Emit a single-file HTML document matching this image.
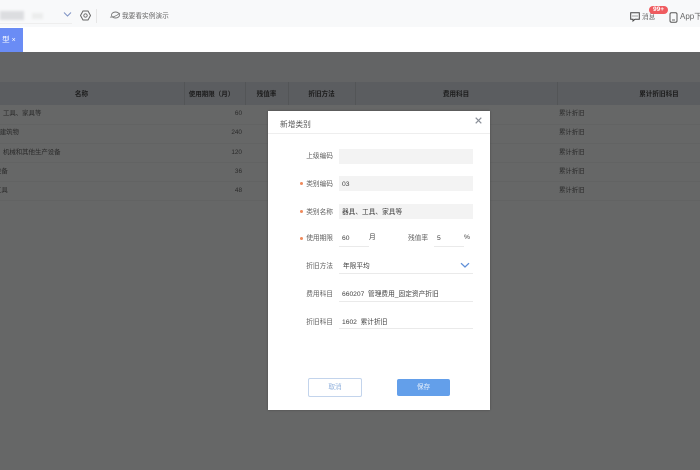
<!DOCTYPE html>
<html lang="zh">
<head>
<meta charset="utf-8">
<style>
html,body{margin:0;padding:0;width:700px;height:470px;overflow:hidden;background:#fff}
body{position:relative;font-family:"Liberation Sans","Noto Sans CJK SC",sans-serif;font-size:6.7px;color:#555;filter:blur(.3px)}
.a{position:absolute;white-space:nowrap}
#top{left:0;top:0;width:700px;height:27px;background:#f8f9fa}
#tab{left:0;top:28px;width:23px;height:24px;background:#6a8cf5;color:#fff;line-height:24px;font-size:7.5px}
#mask{left:0;top:52px;width:700px;height:418px;background:#666767}
#thead{left:0;top:82px;width:700px;height:23px;background:#5b5d60}
.th{top:83px;height:23px;line-height:23px;color:#1c1c1c;font-size:6.6px;text-align:center;font-weight:bold}
.vl{top:82px;width:1px;height:23px;background:#535557}
.td{color:#2a2a2a;font-size:6.4px;line-height:10px}
.hl{left:0;width:700px;height:1px;background:#626363}
#dlg{left:268px;top:111px;width:222px;height:299px;background:#fff;box-shadow:0 0 2px rgba(0,0,0,.3)}
#dlg .a{color:#555}
.lb{width:65px;text-align:right;left:0;font-size:6.7px;line-height:12px;color:#5f5f5f!important}
.st{width:3px;height:3px;border-radius:50%;background:#ef8a5c!important;left:32px}
.inp{left:71px;width:134px;height:15px;background:#f3f3f3}
.val{font-size:6.7px;line-height:12px;color:#3e3e3e!important}
.ul{height:1px;background:#eaeaea}
</style>
</head>
<body>
<div class="a" id="top"></div>
<div class="a" style="left:0;top:11px;width:24px;height:9px;background:#dcdde0;filter:blur(1.2px)"></div>
<div class="a" style="left:32px;top:13px;width:11px;height:6px;background:#eceded;filter:blur(1px)"></div>
<div class="a" style="left:0;top:23px;width:72px;height:1px;background:#eeeeee"></div>
<svg class="a" style="left:63px;top:11px" width="9" height="7" viewBox="0 0 9 7"><path d="M1 1.500 4.500 5 8 1.500" fill="none" stroke="#7f93c4" stroke-width="1"/></svg>
<svg class="a" style="left:80px;top:10px" width="11" height="11" viewBox="0 0 11 11"><path d="M3 1h5l2.500 4.500L8 10H3L.5 5.500z" fill="none" stroke="#666" stroke-width="1"/><circle cx="5.500" cy="5.500" r="1.700" fill="none" stroke="#666" stroke-width=".9"/></svg>
<div class="a" style="left:96px;top:9px;width:1px;height:14px;background:#e6e6e6"></div>
<svg class="a" style="left:109px;top:11px" width="12" height="9" viewBox="0 0 12 9"><ellipse cx="6.500" cy="4" rx="4" ry="3" fill="none" stroke="#777" stroke-width=".9"/><path d="M1 6c2 .5 6-.5 10-4" fill="none" stroke="#777" stroke-width=".8"/></svg>
<div class="a" style="left:122px;top:12px;font-size:6.7px;line-height:10px;color:#666">我要看实例演示</div>

<svg class="a" style="left:630px;top:12px" width="10" height="10" viewBox="0 0 10 10"><path d="M.7.700h8.600v6.600H5L3 9V7.300H.7z" fill="none" stroke="#444" stroke-width="1"/><path d="M2.500 4h1M4.500 4h1M6.500 4h1" stroke="#444" stroke-width=".9"/></svg>
<div class="a" style="left:642px;top:13px;font-size:6.7px;line-height:10px;color:#666">消息</div>
<div class="a" style="left:649px;top:6px;width:19px;height:8px;border-radius:4px;background:#ef5b5f;color:#fff;font-size:6.500px;line-height:8px;text-align:center;font-weight:bold">99+</div>
<svg class="a" style="left:669px;top:12px" width="9" height="11" viewBox="0 0 9 11"><rect x="1" y=".7" width="7" height="9.600" rx="1.500" fill="none" stroke="#555" stroke-width="1"/><path d="M3 8h3" stroke="#555" stroke-width=".9"/></svg>
<div class="a" style="left:680px;top:12px;font-size:8px;line-height:10px;color:#666">App下载</div>

<div class="a" id="tab">&nbsp;型 <span style="font-size:7px">×</span></div>

<div class="a" id="mask"></div>
<div class="a" style="left:0;top:52px;width:700px;height:30px;background:#636465"></div>
<div class="a" id="thead"></div>
<div class="a th" style="left:0;width:163px">名称</div>
<div class="a th" style="left:181px;width:61px;font-size:6.500px">使用期限（月）</div>
<div class="a th" style="left:245px;width:43px">残值率</div>
<div class="a th" style="left:288px;width:67px">折旧方法</div>
<div class="a th" style="left:355px;width:202px">费用科目</div>
<div class="a th" style="left:588px;width:142px">累计折旧科目</div>
<div class="a vl" style="left:184px"></div>
<div class="a vl" style="left:245px"></div>
<div class="a vl" style="left:288px"></div>
<div class="a vl" style="left:355px"></div>
<div class="a vl" style="left:557px"></div>

<div class="a hl" style="top:124px"></div>
<div class="a hl" style="top:143px"></div>
<div class="a hl" style="top:162px"></div>
<div class="a hl" style="top:181px"></div>
<div class="a hl" style="top:200px"></div>

<div class="a td" style="left:3px;top:109px">工具、家具等</div>
<div class="a td" style="left:-13px;top:128px">房屋建筑物</div>
<div class="a td" style="left:3px;top:148px">机械和其他生产设备</div>
<div class="a td" style="left:-5px;top:167px">设备</div>
<div class="a td" style="left:-5px;top:186px">工具</div>

<div class="a td" style="left:212px;width:30px;text-align:right;top:109px">60</div>
<div class="a td" style="left:212px;width:30px;text-align:right;top:128px">240</div>
<div class="a td" style="left:212px;width:30px;text-align:right;top:148px">120</div>
<div class="a td" style="left:212px;width:30px;text-align:right;top:167px">36</div>
<div class="a td" style="left:212px;width:30px;text-align:right;top:186px">48</div>

<div class="a td" style="left:559px;top:109px">累计折旧</div>
<div class="a td" style="left:559px;top:128px">累计折旧</div>
<div class="a td" style="left:559px;top:148px">累计折旧</div>
<div class="a td" style="left:559px;top:167px">累计折旧</div>
<div class="a td" style="left:559px;top:186px">累计折旧</div>

<div class="a" id="dlg">
  <div class="a" style="left:12px;top:8px;font-size:7.700px;line-height:12px">新增类别</div>
  <div class="a" style="left:0;top:22px;width:222px;height:1px;background:#eeeeee"></div>
  <svg class="a" style="left:207px;top:6px" width="7" height="7" viewBox="0 0 7 7"><path d="M.7.700l5.600 5.600M6.300.700.7 6.300" stroke="#8a8f98" stroke-width="1.200"/></svg>

  <div class="a lb" style="top:40px">上级编码</div>
  <div class="a inp" style="top:38px"></div>

  <div class="a st" style="top:71px"></div>
  <div class="a lb" style="top:68px">类别编码</div>
  <div class="a inp" style="top:65px"></div>
  <div class="a val" style="left:74px;top:68px">03</div>

  <div class="a st" style="top:99px"></div>
  <div class="a lb" style="top:96px">类别名称</div>
  <div class="a inp" style="top:93px"></div>
  <div class="a val" style="left:74px;top:96px">器具、工具、家具等</div>

  <div class="a st" style="top:126px"></div>
  <div class="a lb" style="top:122px">使用期限</div>
  <div class="a val" style="left:74px;top:122px">60</div>
  <div class="a ul" style="left:71px;top:135px;width:30px"></div>
  <div class="a val" style="left:101px;top:121px">月</div>
  <div class="a lb" style="left:140px;width:auto;top:122px">残值率</div>
  <div class="a val" style="left:169px;top:122px">5</div>
  <div class="a ul" style="left:166px;top:135px;width:30px"></div>
  <div class="a val" style="left:196px;top:121px">%</div>

  <div class="a lb" style="top:150px">折旧方法</div>
  <div class="a val" style="left:75px;top:150px">年限平均</div>
  <svg class="a" style="left:192px;top:151px" width="10" height="7" viewBox="0 0 10 7"><path d="M1 1.200 5 5l4-3.800" fill="none" stroke="#5f8fd8" stroke-width="1.300"/></svg>
  <div class="a ul" style="left:71px;top:162px;width:134px"></div>

  <div class="a lb" style="top:178px">费用科目</div>
  <div class="a val" style="left:74px;top:178px">660207&nbsp;&nbsp;管理费用_固定资产折旧</div>
  <div class="a ul" style="left:71px;top:190px;width:134px"></div>

  <div class="a lb" style="top:206px">折旧科目</div>
  <div class="a val" style="left:74px;top:206px">1602&nbsp;&nbsp;累计折旧</div>
  <div class="a ul" style="left:71px;top:217px;width:134px"></div>

  <div class="a" style="left:40px;top:267px;width:52px;height:17px;border:1px solid #c3d4ec;border-radius:2px;text-align:center;line-height:18px;font-size:6.7px;color:#8fb0dc">取消</div>
  <div class="a" style="left:129px;top:268px;width:53px;height:17px;background:#639fea;border-radius:2px;text-align:center;line-height:18px;font-size:6.7px;color:#e8f1fc">保存</div>
</div>
</body>
</html>
